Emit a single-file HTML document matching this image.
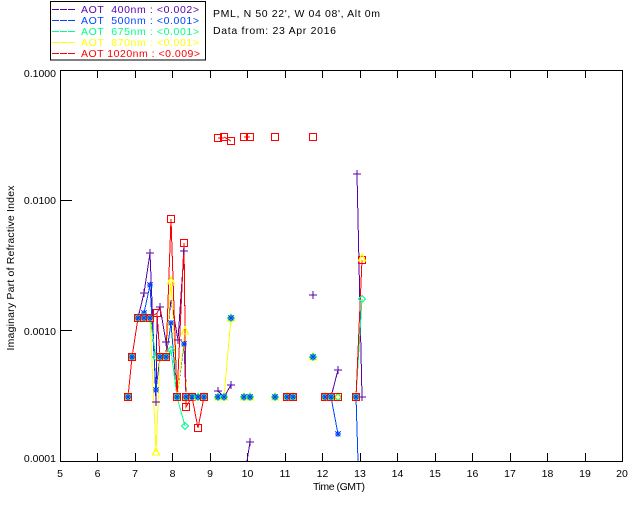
<!DOCTYPE html>
<html><head><meta charset="utf-8"><style>
html,body{margin:0;padding:0;background:#fff;width:640px;height:512px;overflow:hidden}
svg{display:block}
text{font-family:"Liberation Sans",sans-serif;font-size:10.5px;white-space:pre}
.l{fill:none;stroke-width:1;shape-rendering:crispEdges}
.m{fill:none;stroke-width:1;shape-rendering:crispEdges}
</style></head><body>
<svg width="640" height="512" viewBox="0 0 640 512" xmlns="http://www.w3.org/2000/svg">
<defs>
<g id="p" class="m" stroke="#5500aa"><path d="M-4 0H4M0-4V4"/></g>
<g id="b" class="m" stroke="#0044ff"><path d="M-3 0H3M0-3V3M-2.5-2.5L2.5 2.5M-2.5 2.5L2.5-2.5"/></g>
<g id="g" class="m" stroke="#00ff88"><path d="M0-3.5L3.5 0L0 3.5L-3.5 0Z"/></g>
<g id="y" class="m" stroke="#ffff00"><path d="M0-4L3.5 3H-3.5Z" stroke-width="1.4"/></g>
<g id="r" class="m" stroke="#ff0000"><rect x="-3.5" y="-3.5" width="7" height="7" stroke-width="1"/></g>
<g id="c"><use href="#y"/><use href="#g"/><use href="#b"/></g>
<g id="a"><use href="#c"/><use href="#r"/></g>
</defs>

<!-- legend -->
<rect x="50.5" y="1.5" width="155" height="58.5" fill="none" stroke="#000" shape-rendering="crispEdges"/>
<g stroke-width="1" shape-rendering="crispEdges" fill="none">
<path d="M52 9.5H75" stroke="#5500aa" stroke-dasharray="7 1"/>
<path d="M52 20.5H75" stroke="#0044ff" stroke-dasharray="7 1"/>
<path d="M52 31.5H75" stroke="#00ff88" stroke-dasharray="7 1"/>
<path d="M52 42.5H75" stroke="#ffff00" stroke-dasharray="7 1"/>
<path d="M52 53.5H75" stroke="#ff0000" stroke-dasharray="7 1"/>
</g>
<text x="81" y="13" fill="#5500aa" textLength="118" lengthAdjust="spacing">AOT  400nm : &lt;0.002&gt;</text>
<text x="81" y="24" fill="#0044ff" textLength="118" lengthAdjust="spacing">AOT  500nm : &lt;0.001&gt;</text>
<text x="81" y="35" fill="#00ff88" textLength="118" lengthAdjust="spacing">AOT  675nm : &lt;0.001&gt;</text>
<text x="81" y="46" fill="#ffff00" textLength="118" lengthAdjust="spacing">AOT  870nm : &lt;0.001&gt;</text>
<text x="81" y="57" fill="#ff0000" textLength="119" lengthAdjust="spacing">AOT 1020nm : &lt;0.009&gt;</text>

<text x="213" y="17" fill="#000" textLength="167" lengthAdjust="spacing">PML, N 50 22', W 04 08', Alt 0m</text>
<text x="213" y="34" fill="#000" textLength="123" lengthAdjust="spacing">Data from: 23 Apr 2016</text>

<!-- axes -->
<g stroke="#000" fill="none" shape-rendering="crispEdges" stroke-width="1">
<rect x="60.5" y="70.5" width="562" height="391"/>
<path d="M97.5 70V78M135.5 70V78M172.5 70V78M210.5 70V78M247.5 70V78M285.5 70V78M322.5 70V78M360.5 70V78M397.5 70V78M435.5 70V78M472.5 70V78M510.5 70V78M547.5 70V78M585.5 70V78"/>
<path d="M97.5 461V453M135.5 461V453M172.5 461V453M210.5 461V453M247.5 461V453M285.5 461V453M322.5 461V453M360.5 461V453M397.5 461V453M435.5 461V453M472.5 461V453M510.5 461V453M547.5 461V453M585.5 461V453"/>
<path d="M60 200.5H72M60 330.5H72"/>
</g>
<g fill="#000" text-anchor="end">
<text x="56" y="77">0.1000</text>
<text x="56" y="204">0.0100</text>
<text x="56" y="335">0.0010</text>
<text x="56" y="462">0.0001</text>
</g>
<g fill="#000" text-anchor="middle">
<text x="60" y="477">5</text><text x="97.5" y="477">6</text><text x="135" y="477">7</text><text x="172.5" y="477">8</text><text x="210" y="477">9</text><text x="247.5" y="477">10</text><text x="285" y="477">11</text><text x="322.5" y="477">12</text><text x="360" y="477">13</text><text x="397.5" y="477">14</text><text x="435" y="477">15</text><text x="472.5" y="477">16</text><text x="510" y="477">17</text><text x="547.5" y="477">18</text><text x="585" y="477">19</text><text x="622" y="477">20</text>
<text x="339" y="490" textLength="52" lengthAdjust="spacing">Time (GMT)</text>
<text transform="translate(14 268) rotate(-90)" textLength="165" lengthAdjust="spacing">Imaginary Part of Refractive Index</text>
</g>

<!-- series lines -->
<g class="l">
<g stroke="#5500aa">
<path d="M128 397L132 357L138 318L144 293L150 253L156 402L157 313L160 307L166 342L171 300L178 340L184 251L186 397L192 397L198 397L204 397"/>
<path d="M218 391L224 397L231 385"/>
<path d="M247 461L250 442"/>
<path d="M331 397L338 370"/>
<path d="M357 174L362 397"/>
</g>
<g stroke="#0044ff">
<path d="M128 397L132 357L138 318L144 313L150 285L156 390L160 357L166 357L171 323L177 397L184 344L186 397L192 397L198 397L204 397"/>
<path d="M331 397L338 434"/>
<path d="M356 397L358 461"/>
</g>
<g stroke="#00ff88">
<path d="M128 397L132 357L138 318L144 318L150 318L156 357L160 357L166 357L171 350L177 397L185 426"/>
<path d="M356 397L362 299"/>
</g>
<g stroke="#ffff00">
<path d="M128 397L132 357L138 318L144 318L150 318L156 452L160 357L166 357L171 281L177 397L185 331L186 397L192 397L198 397L204 397"/>
<path d="M224 397L231 318"/>
<path d="M356 397L362 260"/>
</g>
<g stroke="#ff0000">
<path d="M128 397L132 357L138 318L144 318L150 318L157 313L160 357L166 357L171 219L177 397L184 243L186 407L192 397L198 428L204 397"/>
<path d="M356 397L362 260"/>
</g>
</g>

<!-- purple markers -->
<use href="#p" x="144" y="293"/><use href="#p" x="150" y="253"/><use href="#p" x="156" y="402"/><use href="#p" x="160" y="307"/><use href="#p" x="166" y="342"/><use href="#p" x="178" y="340"/><use href="#p" x="184" y="251"/><use href="#p" x="218" y="391"/><use href="#p" x="231" y="385"/><use href="#p" x="250" y="442"/><use href="#p" x="313" y="295"/><use href="#p" x="338" y="370"/><use href="#p" x="357" y="174"/><use href="#p" x="362" y="397"/>

<!-- red only squares -->
<use href="#r" x="157" y="313"/><use href="#r" x="171" y="219"/><use href="#r" x="184" y="243"/><use href="#r" x="186" y="407"/><use href="#r" x="198" y="428"/>
<use href="#r" x="218" y="138"/><use href="#r" x="224" y="137"/><use href="#r" x="231" y="141"/><use href="#r" x="244" y="137"/><use href="#r" x="250" y="137"/><use href="#r" x="275" y="137"/><use href="#r" x="313" y="137"/><use href="#r" x="362" y="260"/>
<g stroke-width="1" shape-rendering="crispEdges" stroke="#ff0000" fill="none"><path d="M218 138H224M224 137L231 141M244 137H250M247 134V140"/></g>

<!-- blue / green / yellow markers -->
<use href="#b" x="150" y="285"/><use href="#b" x="144" y="313"/><use href="#b" x="156" y="390"/><use href="#b" x="171" y="323"/><use href="#b" x="184" y="344"/><use href="#b" x="338" y="434"/>
<use href="#g" x="156" y="357"/><use href="#g" x="171" y="350"/><use href="#g" x="185" y="426"/><use href="#g" x="362" y="299"/>
<use href="#y" x="171" y="281"/><use href="#y" x="156" y="452"/><use href="#y" x="185" y="331"/>
<use href="#y" x="362" y="258"/>

<!-- composite markers -->
<use href="#a" x="128" y="397"/><use href="#a" x="132" y="357"/><use href="#a" x="138" y="318"/><use href="#a" x="144" y="318"/><use href="#a" x="150" y="318"/><use href="#a" x="160" y="357"/><use href="#a" x="166" y="357"/><use href="#a" x="177" y="397"/><use href="#a" x="186" y="397"/><use href="#a" x="192" y="397"/><use href="#c" x="198" y="397"/><use href="#a" x="204" y="397"/>
<use href="#c" x="218" y="397"/><use href="#c" x="224" y="397"/><use href="#c" x="231" y="318"/><use href="#c" x="244" y="397"/><use href="#c" x="250" y="397"/><use href="#c" x="275" y="397"/><use href="#c" x="313" y="357"/>
<use href="#a" x="287" y="397"/><use href="#a" x="293" y="397"/><use href="#a" x="325" y="397"/><use href="#a" x="331" y="397"/>
<use href="#y" x="338" y="397"/><use href="#g" x="338" y="397"/><use href="#r" x="338" y="397"/><use href="#a" x="356" y="397"/>
</svg>
</body></html>
